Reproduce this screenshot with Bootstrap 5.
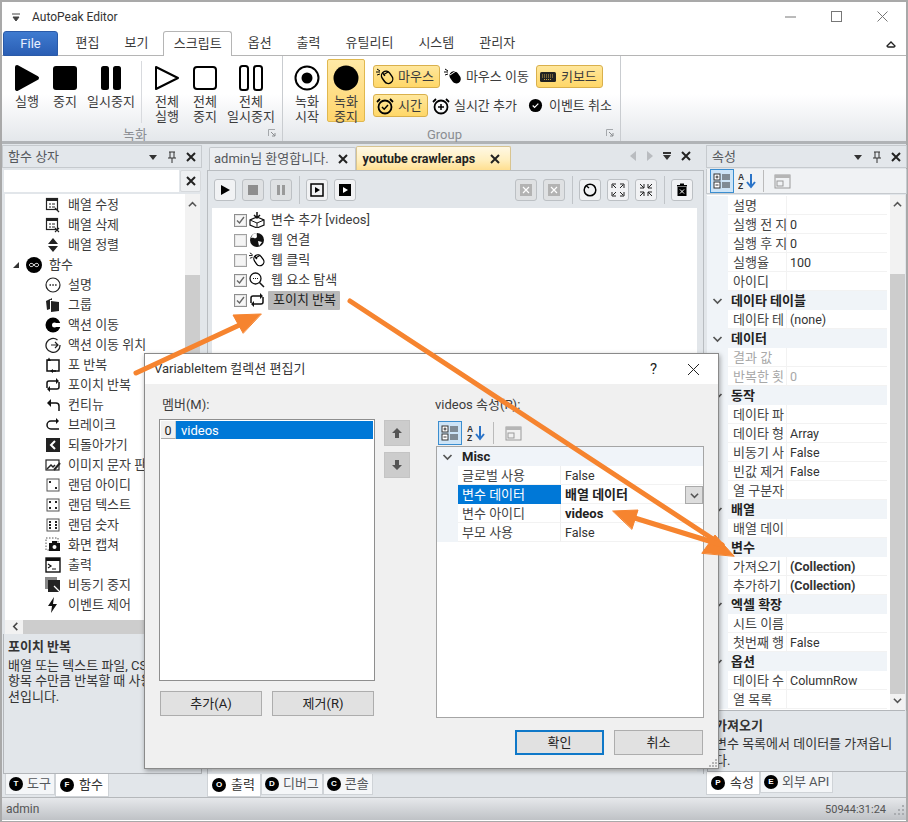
<!DOCTYPE html>
<html lang="ko">
<head>
<meta charset="utf-8">
<title>AutoPeak Editor</title>
<link rel="stylesheet" href="https://cdn.jsdelivr.net/npm/bootstrap@5.3.0/dist/css/bootstrap.min.css">
<style>
html,body{margin:0;width:908px;height:822px;overflow:hidden;background:#fff}
body{font-family:Roboto,"Noto Sans CJK KR",sans-serif;font-size:13px;line-height:16px;color:#3c3c3c}
svg{display:block;flex:none}
.aw{position:relative;width:908px;height:822px;border:1px solid #a9a9a9;border-width:2px 2px 1px 2px}
.tbar{height:29px;padding-left:18px;background:#fff}
.tbar-t{margin-left:11px;color:#333;font-size:12px}
.wbtns{margin-left:auto;padding-right:18px;gap:35px}
.rtabs{height:25px;background:#fff;border-bottom:1px solid #b5b5b5;padding-left:1px;position:relative}
.filebtn{width:55px;height:25px;background:linear-gradient(#3f7bd0,#2a5eb4);border:1px solid #2a5aa8;border-radius:3px 3px 0 0;color:#e8f0ff;text-align:center;line-height:23px;font-size:13px;margin-right:5px}
.rt{padding:0 12.5px;line-height:24px;white-space:nowrap}
.rt-on{background:#fff;border:1px solid #b5b5b5;border-bottom:0;border-radius:3px 3px 0 0;padding:0 9.5px;margin:0 3px 0 2.5px;height:25px;position:relative;z-index:1}
.rcol{position:absolute;right:10px;top:8px}
.ribbon{height:85px;background:linear-gradient(#fff 0,#fff 45%,#e4e7eb 100%);flex:none}
.rg{position:relative;border-right:1px solid #c9ccd0;height:85px;flex:none}
.rg-a{width:281px}
.rg-b{width:338px}
.rg-c{flex:1;border-right:0}
.rg-lab{position:absolute;bottom:-2px;left:0;right:14px;text-align:center;color:#8a8d92;height:17px;line-height:17px;font-size:13px}
.launch{position:absolute;right:6px;bottom:4px}
.bigb{height:75px;padding-top:8px;text-align:center;line-height:15px;white-space:nowrap;flex:none}
.bigb svg{margin:0 auto 2px}
.w38{width:38px}.w54{width:54px}
.rsep{width:1px;height:62px;margin:5px 3px 0;background:#d8dade;flex:none}
.rec-on{background:linear-gradient(#ffe9a6,#ffd56c);border:1px solid #e0b84f;border-radius:2px;height:63px;margin-top:3px;padding-top:4px;margin-left:1px}
.smrows{gap:6px;padding-top:9px;margin-left:8px}
.ybtn{height:23px;border:1px solid #d9b04c;background:linear-gradient(#ffe79c,#ffd768);border-radius:3px;padding:0 5px 0 2px;gap:4px;white-space:nowrap}
.ytxt{gap:4px;white-space:nowrap}
.main{height:656px;background:#e2e6ea;border-top:3px solid #b0b3b6;flex:none}
.lp{width:200px;padding-top:1px;flex:none}
.phead{height:23px;padding:0 5px;border:1px solid #c6cace;background:#e3e7eb;color:#55585c;margin-bottom:1px}
.pctl{margin-left:auto;gap:9px}
.searchrow{height:24px;gap:1px;padding:1px 1px 1px 2px}
.srch{flex:1;background:#fff}
.xbtn{width:21px;background:#eef0f2;border:1px solid #d6d9dc;border-radius:2px}
.tree{height:440px;background:#fff;margin:1px 2px 0 3px;position:relative;overflow:hidden;padding-top:1px}
.tr{height:20px;padding-left:40px;gap:7px;white-space:nowrap}
.tr-top{padding-left:7px;gap:4px}
.vs{position:absolute;right:0;top:0;bottom:14px;width:15px;background:#f2f2f2}
.vs-th{position:absolute;left:0;right:0;top:81px;bottom:0;background:#cdcdcd}
.vs-up{position:absolute;left:3px;top:6px}
.hs{position:absolute;left:0;right:0;bottom:0;height:14px;background:#f2f2f2}
.hs-th{position:absolute;left:18px;right:40px;top:0;bottom:0;background:#cdcdcd}
.hs-l{position:absolute;left:6px;top:2px}
.desc{border:1px solid #b3b6ba;border-top:0;background:#e2e6ea;padding:5px 4px;margin:0 0 0 1px;color:#333}
.desc b{display:block;margin-bottom:3px;font-weight:700}
.ld{height:140px;line-height:15.5px}
.ld span{display:block;white-space:nowrap}
.btabs{height:23px;padding-left:3px}
.bt{height:21px;padding:0 3px;gap:4px;background:#f4f6f8;border:1px solid #cfd3d7;border-top:0;white-space:nowrap;color:#55585c}
.bt-on{height:23px;background:#fff;color:#333;padding:0 5px 0 4px;gap:5px}
.ltr{width:14px;height:14px;border-radius:50%;background:#000;color:#fff;font-size:8px;font-weight:700;line-height:14px;text-align:center;flex:none;font-family:"Liberation Sans",sans-serif}
.cp{width:497px;margin-left:5px;padding-top:2px;flex:none}
.ctabs{height:24px;position:relative}
.ct{height:23px;margin-top:1px;background:#eceef1;border:1px solid #c4c8cc;border-bottom:0;border-radius:2px 2px 0 0;padding:0 7px 0 4px;gap:9px;white-space:nowrap;margin-left:2px;color:#55585c}
.ct-on{height:24px;margin-top:0;margin-left:0;background:linear-gradient(#fff8e4 0,#ffefc0 55%,#ffdf90 100%);border-color:#d8c490;font-weight:700;color:#222;padding:0 10px 0 6px;font-size:12.5px;gap:15px}
.ctctl{margin-left:auto;gap:9px;padding-right:13px}
.cbox{border:1px solid #b9bdc1;border-bottom:0;flex:1;padding:0 6px 0 4px;height:601px}
.ctb{height:37px;padding-left:2px}
.tb{width:22px;height:22px;border:1px solid #bcc0c4;border-radius:3px;background:#f1f2f4;display:flex;align-items:center;justify-content:center;flex:none;margin-right:6px}
.tb-dis{background:#dfe1e3}
.tbsep{width:1px;height:28px;background:#c0c4c8;margin:0 6px 0 1px;flex:none}
.list{height:564px;background:linear-gradient(#fff 92%,#e8eaec);padding:2px 0 0 22px}
.lr{height:20px;gap:2px;white-space:nowrap}
.chk{width:13px;height:13px;flex:none}
.sel{background:#b9b9b9;padding:0 4px 0 5px;margin-left:1px;height:19px;line-height:18px;border-radius:1px;color:#222}
.lbl{margin-left:4px}
.cbt{padding-left:0;height:23px}
.rp{width:201px;margin-left:2px;padding-top:1px;flex:none}
.rtbar{height:25px;padding-left:3px;gap:1px;background:#f0f2f4;border:1px solid #c6cace;border-top:0}
.pgic{width:24px;height:24px;display:flex;align-items:center;justify-content:center;flex:none}
.pgic-on{background:#cde4f7;border:1px solid #3b8ed0}
.pgsep{width:1px;height:22px;background:#bbb;margin:0 6px 0 3px}
.pgwrap{height:516px;background:#fff;position:relative;margin:1px 2px 0 1px;overflow:hidden;border-bottom:1px solid #b3b6ba}
.pg{position:absolute;left:0;top:1px;width:180px}
.pr{height:19px;display:flex;white-space:nowrap;line-height:20px}
.pg-g{width:21px;flex:none;background:#f0f4f8}
.pg-n{width:59px;flex:none;overflow:hidden;padding-left:5px;border-bottom:1px solid #f2f2f2;border-right:1px solid #f2f2f2;color:#444}
.pg-v{flex:1;padding-left:3px;border-bottom:1px solid #f2f2f2;font-size:12.5px;color:#333}
.pg-dim{color:#a8a8a8}
.pc{height:19px;background:#f0f4f8;font-weight:700;display:flex;align-items:center;white-space:nowrap;color:#222;padding-left:4px;gap:7px}
.pc svg{width:13px}
.pgs{position:absolute;right:0;top:0;bottom:0;width:15px;background:#f2f2f2}
.pgs-th{position:absolute;left:0;right:0;top:79px;bottom:16px;background:#cdcdcd}
.pgs-u{position:absolute;left:3px;top:5px}
.pgs-d{position:absolute;left:3px;bottom:5px}
.rd{height:61px;line-height:17px;padding:6px 2px 0 7px;white-space:nowrap;margin-left:1px}
.rd b{margin-bottom:1px}
.status{height:23px;background:linear-gradient(#e6e8eb,#bfc2c6);border-top:1px solid #b5b8bb;padding:0 1px 0 4px;color:#555;font-size:12px;line-height:23px;flex:none}
.st-t{gap:7px;font-size:11px}
.dlg{position:absolute;left:142px;top:351px;width:575px;height:416px;background:#f0f0f0;border:1px solid #8a8a8a;box-shadow:1px 2px 5px rgba(0,0,0,.35);z-index:5}
.dt{height:30px;background:#fff;padding-left:9px;color:#333}
.dtctl{margin-left:auto;gap:30px;padding-right:18px}
.dbody{position:relative;height:384px}
.d-lab{position:absolute;top:13px;white-space:nowrap}
.mlist{position:absolute;left:14px;top:35px;width:216px;height:262px;background:#fff;border:1px solid #8e8e8e;padding:1px;overflow:hidden}
.mi{height:18px;display:flex}
.mi-i{width:15px;background:#f0f0f0;border-right:1px solid #ccc;border-bottom:1px solid #aaa;text-align:center;line-height:19px;font-size:12.5px;flex:none;color:#222}
.mi-t{flex:1;background:#0078d7;color:#fff;padding-left:5px;line-height:19px;font-size:13px}
.ud{position:absolute;left:239px;width:26px;height:26px;background:#ccc;border:1px solid #c4c4c4;display:flex;align-items:center;justify-content:center}
.dbtn{position:absolute;height:25px;background:#e1e1e1;border:1px solid #adadad;text-align:center;line-height:23px;color:#222}
.dtb{position:absolute;left:293px;top:37px;gap:2px}
.dpg{position:absolute;left:291px;top:62px;width:268px;height:272px;background:#fff;border:1px solid #a5a5a5;overflow:hidden}
.dpc{height:19px;background:#f0f4f9;font-weight:700;display:flex;align-items:center;padding-left:5px;gap:9px;color:#222}
.dpr{height:19px;display:flex;line-height:20px;position:relative}
.dpr .pg-g{width:21px}
.dpr .pg-n{width:103px;padding-left:4px;border-right:1px solid #eee}
.dpr .pg-v{padding-left:4px;font-size:12.5px}
.dpr-s .pg-n{background:#0078d7;color:#fff;border:0;padding-left:4px}
.dpr b{font-size:13px;color:#222;font-weight:700}
.dd{position:absolute;right:0;top:1px;width:18px;height:18px;background:#ddd;border:1px solid #aaa;display:flex;align-items:center;justify-content:center}
.grip{position:absolute;right:0;bottom:0}
.arrows{position:absolute;left:-2px;top:-2px;z-index:9;pointer-events:none}
</style>
</head>
<body>
<svg width="0" height="0" style="position:absolute">
<defs>
<symbol id="i-play" viewBox="0 0 26 28"><path d="M3 3L23 14L3 25Z" fill="#000" stroke="#000" stroke-width="4" stroke-linejoin="round"/></symbol>
<symbol id="i-stop" viewBox="0 0 26 28"><rect x="1" y="2" width="24" height="24" rx="3" fill="#000"/></symbol>
<symbol id="i-pause" viewBox="0 0 26 28"><rect x="3" y="2" width="8" height="24" rx="2.5" fill="#000"/><rect x="15" y="2" width="8" height="24" rx="2.5" fill="#000"/></symbol>
<symbol id="o-play" viewBox="0 0 26 28"><path d="M2 3L24 14L2 25Z" fill="#fff" stroke="#000" stroke-width="2" stroke-linejoin="round"/></symbol>
<symbol id="o-stop" viewBox="0 0 26 28"><rect x="2" y="3" width="22" height="22" rx="3" fill="#fff" stroke="#000" stroke-width="2"/></symbol>
<symbol id="o-pause" viewBox="0 0 26 28"><rect x="2" y="2" width="8" height="24" rx="2.5" fill="#fff" stroke="#000" stroke-width="2"/><rect x="16" y="2" width="8" height="24" rx="2.5" fill="#fff" stroke="#000" stroke-width="2"/></symbol>
<symbol id="i-rec" viewBox="0 0 26 28"><circle cx="13" cy="14" r="11.5" fill="#fff" stroke="#000" stroke-width="2"/><circle cx="13" cy="14" r="5.5" fill="#000"/></symbol>
<symbol id="i-recon" viewBox="0 0 26 28"><circle cx="13" cy="14" r="12.5" fill="#000"/></symbol>
<symbol id="i-mouse" viewBox="0 0 18 18"><rect x="7" y="3" width="9" height="13" rx="4.5" transform="rotate(-35 11 10)" fill="none" stroke="#000" stroke-width="1.4"/><path d="M7 7L12 4M9 8l-2.500-3.500" stroke="#000" stroke-width="1.200" fill="none"/><path d="M0 4h4M1 1l3 2M1 7l3-1" stroke="#000" stroke-width="1"/></symbol>
<symbol id="i-mousef" viewBox="0 0 18 18"><rect x="7" y="3" width="9" height="13" rx="4.5" transform="rotate(-35 11 10)" fill="#000"/><path d="M6 7L12 3" stroke="#fff" stroke-width="1"/><path d="M0 4h4M1 1l3 2M1 7l3-1" stroke="#000" stroke-width="1"/></symbol>
<symbol id="i-kbd" viewBox="0 0 18 18"><rect x="1" y="4" width="16" height="10" rx="1.500" fill="#222"/><path d="M3 7h12M3 9h12M5 11.500h8" stroke="#c9a24a" stroke-width="1" stroke-dasharray="1 1"/></symbol>
<symbol id="i-clock" viewBox="0 0 18 18"><circle cx="9" cy="10" r="6.500" fill="none" stroke="#000" stroke-width="1.800"/><path d="M6 10l2.200 2.200L12 8" fill="none" stroke="#000" stroke-width="1.500"/><path d="M1 5l3-3M17 5l-3-3" stroke="#000" stroke-width="1.800"/></symbol>
<symbol id="i-clockp" viewBox="0 0 18 18"><circle cx="9" cy="10" r="6.500" fill="none" stroke="#000" stroke-width="1.800"/><path d="M6 10h6M9 7v6" fill="none" stroke="#000" stroke-width="1.500"/><path d="M1 5l3-3M17 5l-3-3" stroke="#000" stroke-width="1.800"/></symbol>
<symbol id="i-ccheck" viewBox="0 0 16 16"><circle cx="8" cy="8" r="7" fill="#000"/><path d="M5 8l2 2 4-4" fill="none" stroke="#fff" stroke-width="1.300"/></symbol>
<symbol id="i-launch" viewBox="0 0 8 8"><path d="M.5 7V.5H7" fill="none" stroke="#a5a8ac"/><path d="M3 3l4 4M7 4v3H4" fill="none" stroke="#8a8d90"/></symbol>
<symbol id="x-s" viewBox="0 0 10 10"><path d="M1 1l8 8M9 1l-8 8" stroke="#222" stroke-width="2"/></symbol>
<symbol id="tri-d" viewBox="0 0 10 10"><path d="M1 3h8L5 8z" fill="#333"/></symbol>
<symbol id="pin" viewBox="0 0 10 12"><path d="M2 1h6M3 1v6M7 1v6M1 7h8M5 7v5" stroke="#333" fill="none"/></symbol>
<symbol id="chev-u" viewBox="0 0 10 10"><path d="M1 7l4-4 4 4" fill="none" stroke="#555" stroke-width="1.700"/></symbol>
<symbol id="chev-d" viewBox="0 0 10 10"><path d="M1 3l4 4 4-4" fill="none" stroke="#555" stroke-width="1.700"/></symbol>
<symbol id="chev-l" viewBox="0 0 10 10"><path d="M7 1L3 5l4 4" fill="none" stroke="#444" stroke-width="1.700"/></symbol>
<symbol id="c-tbl" viewBox="0 0 16 16"><rect x="1.500" y="1.500" width="11" height="11" fill="#fff" stroke="#222" stroke-width="1.200"/><rect x="1.500" y="1.500" width="11" height="2.500" fill="#222"/><path d="M4 7h2M7 7h3M4 10h2M7 10h3" stroke="#222"/><path d="M10 11l4 4" stroke="#222" stroke-width="1.300"/></symbol>
<symbol id="c-tblx" viewBox="0 0 16 16"><rect x="1.500" y="1.500" width="11" height="11" fill="#fff" stroke="#222" stroke-width="1.200"/><rect x="1.500" y="1.500" width="11" height="2.500" fill="#222"/><path d="M4 7h2M7 7h3M4 10h2M7 10h3" stroke="#222"/><path d="M10 11l4 4M14 11l-4 4" stroke="#222" stroke-width="1.100"/></symbol>
<symbol id="c-sort" viewBox="0 0 16 16"><path d="M8 1l5 6H3zM8 15l5-6H3z" fill="#222"/></symbol>
<symbol id="c-inf" viewBox="0 0 16 16"><circle cx="8" cy="8" r="8" fill="#000"/><path d="M8 8C6.500 5.800 3.500 6 3.500 8S6.500 10.200 8 8 12.500 5.800 12.500 8 9.500 10.200 8 8" fill="none" stroke="#fff" stroke-width="1"/></symbol>
<symbol id="c-dots" viewBox="0 0 16 16"><circle cx="8" cy="8" r="7" fill="#fff" stroke="#222" stroke-width="1.200"/><path d="M4.500 8h1.500M7.300 8h1.500M10.100 8h1.500" stroke="#222" stroke-width="1.400"/></symbol>
<symbol id="c-grp" viewBox="0 0 16 16"><path d="M1 4l4-2v10l-3 1zM4 3l3-2v2zM6 4l8 1v9l-8 1z" fill="#222"/></symbol>
<symbol id="c-c" viewBox="0 0 16 16"><circle cx="8" cy="8" r="7.500" fill="#000"/><circle cx="9.500" cy="8" r="2.500" fill="#fff"/><path d="M10 6h6v4h-6z" fill="#fff"/></symbol>
<symbol id="c-go" viewBox="0 0 16 16"><path d="M12.500 3A7 7 0 1 0 15 8" fill="none" stroke="#222" stroke-width="1.300"/><path d="M4 8h7M8 5l3 3-3 3" stroke="#222" fill="none" stroke-width="1.200" transform="translate(2 0)"/></symbol>
<symbol id="c-for" viewBox="0 0 16 16"><path d="M5 3h9v11H8" fill="none" stroke="#111" stroke-width="1.500"/><path d="M11 14H2V3h1" fill="none" stroke="#111" stroke-width="1.500"/><path d="M2 4l2-3.500L6 4zM8 12l-3 2 3 2z" fill="#111"/></symbol>
<symbol id="c-each" viewBox="0 0 16 16"><path d="M2 11V6a2 2 0 0 1 2-2h9M14 5v5a2 2 0 0 1-2 2H3" fill="none" stroke="#111" stroke-width="1.500"/><path d="M11 1l3 3-3 3zM5 9l-3 3 3 3z" fill="#111"/></symbol>
<symbol id="c-cont" viewBox="0 0 16 16"><path d="M14 14V9a3 3 0 0 0-3-3H4" fill="none" stroke="#111" stroke-width="1.500"/><path d="M6 2L2 6l4 4z" fill="#111"/></symbol>
<symbol id="c-brk" viewBox="0 0 16 16"><path d="M13 4H6a4 4 0 0 0 0 8h8" fill="none" stroke="#111" stroke-width="1.500"/><path d="M11 1l3 3-3 3z" fill="#111"/></symbol>
<symbol id="c-back" viewBox="0 0 16 16"><rect x="1" y="1" width="14" height="14" fill="#222"/><path d="M10 4L6 8l4 4" fill="none" stroke="#fff" stroke-width="2"/></symbol>
<symbol id="c-img" viewBox="0 0 16 16"><rect x="1" y="3" width="13" height="10" fill="#fff" stroke="#222" stroke-width="1.200"/><path d="M2 12l4-4 2 2 2-2" stroke="#222" fill="none" stroke-width="1.500"/><path d="M9 13l6-7" stroke="#222" stroke-width="2"/></symbol>
<symbol id="c-d1" viewBox="0 0 16 16"><rect x="2" y="2" width="12" height="12" fill="#fff" stroke="#555"/><rect x="4" y="4" width="2" height="2" fill="#222"/><rect x="10" y="10" width="2" height="2" fill="#222"/></symbol>
<symbol id="c-d2" viewBox="0 0 16 16"><rect x="2" y="2" width="12" height="12" fill="#fff" stroke="#555"/><path d="M4 4h2v2H4zM10 4h2v2h-2zM4 10h2v2H4zM10 10h2v2h-2z" fill="#222"/></symbol>
<symbol id="c-d3" viewBox="0 0 16 16"><rect x="2" y="2" width="12" height="12" fill="#fff" stroke="#555"/><path d="M4 4h2v2H4zM10 4h2v2h-2zM4 7h2v2H4zM10 7h2v2h-2zM4 10h2v2H4zM10 10h2v2h-2z" fill="#222"/></symbol>
<symbol id="c-cap" viewBox="0 0 16 16"><rect x="1" y="1" width="12" height="12" fill="none" stroke="#555" stroke-dasharray="1.500 1.500"/><rect x="4" y="6" width="11" height="8" fill="#111"/><circle cx="9.500" cy="10" r="2" fill="#fff"/><rect x="7" y="4" width="5" height="3" fill="#111"/></symbol>
<symbol id="c-term" viewBox="0 0 16 16"><rect x="1" y="1" width="14" height="14" fill="#fff" stroke="#111" stroke-width="1.400"/><rect x="1" y="1" width="14" height="3" fill="#111"/><path d="M3 7l3 2-3 2M7 12h4" fill="none" stroke="#111" stroke-width="1.200"/></symbol>
<symbol id="c-asyn" viewBox="0 0 16 16"><rect x="0" y="0" width="12" height="12" fill="#888"/><rect x="3" y="3" width="12" height="12" fill="#222"/><path d="M9 9l6 6" stroke="#fff" stroke-width="1.300"/></symbol>
<symbol id="c-bolt" viewBox="0 0 16 16"><path d="M9 0L3 9h4l-1 7 6-9H8z" fill="#111"/></symbol>
<symbol id="l-box" viewBox="0 0 16 16"><path d="M8 5l7 3v5l-7 3-7-3V8z" fill="#fff" stroke="#111" stroke-width="1.200"/><path d="M1 8l7 3 7-3M8 11v5" fill="none" stroke="#111"/><path d="M8 0v6M5 3l3 3 3-3" stroke="#111" fill="none" stroke-width="1.500"/></symbol>
<symbol id="l-web" viewBox="0 0 16 16"><circle cx="8" cy="8" r="7" fill="#111"/><path d="M2 6c3-1 3 1 5 0s0-4 1-5c-3 0-5 2-6 5zM9 9l4 1-3 4z" fill="#fff"/></symbol>
<symbol id="l-srch" viewBox="0 0 16 16"><circle cx="6.500" cy="6.500" r="5.500" fill="#fff" stroke="#111" stroke-width="1.300"/><path d="M10.500 10.500L15 15" stroke="#111" stroke-width="1.500"/><path d="M4 6.500h1M6 6.500h1M8 6.500h1" stroke="#111"/></symbol>
<symbol id="chk-on" viewBox="0 0 13 13"><rect x=".5" y=".5" width="12" height="12" fill="#e6e6e6" stroke="#8e8e8e"/><rect x="2" y="2" width="9" height="9" fill="#f7f7f7"/><path d="M3 6.500l2.500 2.500L10 3" fill="none" stroke="#666" stroke-width="1.400"/></symbol>
<symbol id="chk-off" viewBox="0 0 13 13"><rect x=".5" y=".5" width="12" height="12" fill="#e6e6e6" stroke="#a0a0a0"/><rect x="2" y="2" width="9" height="9" fill="#f4f4f4"/></symbol>
<symbol id="p-cat" viewBox="0 0 18 18"><rect x="1" y="2" width="6" height="6" fill="#fff" stroke="#333"/><rect x="1" y="10" width="6" height="6" fill="#fff" stroke="#333"/><path d="M2.500 5h3M4 3.500v3M2.500 13h3" stroke="#333"/><path d="M9 3h8M9 5h8M9 7h8M9 11h8M9 13h8M9 15h8" stroke="#333" stroke-width="1"/></symbol>
<symbol id="p-az" viewBox="0 0 18 18"><text x="0" y="8" font-size="8.500" font-weight="700" font-family="Liberation Sans" fill="#333">A</text><text x="0" y="17" font-size="8.500" font-weight="700" font-family="Liberation Sans" fill="#333">Z</text><path d="M13 2v12M9 10l4 5 4-5" fill="none" stroke="#2b74c8" stroke-width="2"/></symbol>
<symbol id="p-pg" viewBox="0 0 18 18"><rect x="1" y="3" width="15" height="13" fill="none" stroke="#9a9a9a"/><rect x="1" y="3" width="15" height="3" fill="#b5b5b5"/><rect x="3" y="9" width="6" height="5" fill="none" stroke="#9a9a9a"/></symbol>
</defs>
</svg>
<div class="aw d-flex flex-column">
  <div class="tbar d-flex align-items-center flex-none">
    <svg width="10" height="10" style="margin-left:-9px"><path d="M1 2h8M2 5h6l-3 4z" stroke="#444" fill="#444"/></svg>
    <span class="tbar-t">AutoPeak Editor</span>
    <div class="wbtns d-flex align-items-center">
      <svg width="11" height="11"><path d="M0 6h11" stroke="#777"/></svg>
      <svg width="11" height="11"><rect x=".5" y=".5" width="10" height="10" fill="none" stroke="#777"/></svg>
      <svg width="11" height="11"><path d="M.5.500l10 10M10.500.500l-10 10" stroke="#777"/></svg>
    </div>
  </div>
  <div class="rtabs d-flex flex-none">
    <div class="filebtn">File</div>
    <div class="rt">편집</div><div class="rt">보기</div>
    <div class="rt rt-on">스크립트</div>
    <div class="rt">옵션</div><div class="rt">출력</div><div class="rt">유틸리티</div><div class="rt">시스템</div><div class="rt">관리자</div>
    <svg class="rcol" width="10" height="10" viewBox="0 0 10 10"><path d="M1 7l4-4 4 4-1 1H2z" fill="none" stroke="#222" stroke-width="1.300"/></svg>
  </div>
  <div class="ribbon d-flex">
    <div class="rg rg-a d-flex align-items-start ps-1">
      <div class="bigb w38" style="margin-left:2px"><svg width="26" height="28"><use href="#i-play"/></svg>실행</div>
      <div class="bigb w38"><svg width="26" height="28"><use href="#i-stop"/></svg>중지</div>
      <div class="bigb w54"><svg width="26" height="28"><use href="#i-pause"/></svg>일시중지</div>
      <div class="rsep"></div>
      <div class="bigb w38" style="margin-left:3px"><svg width="26" height="28"><use href="#o-play"/></svg>전체<br>실행</div>
      <div class="bigb w38"><svg width="26" height="28"><use href="#o-stop"/></svg>전체<br>중지</div>
      <div class="bigb w54"><svg width="26" height="28"><use href="#o-pause"/></svg>전체<br>일시중지</div>
      <div class="rg-lab">녹화</div>
      <svg class="launch" width="8" height="8"><use href="#i-launch"/></svg>
    </div>
    <div class="rg rg-b d-flex align-items-start" style="padding-left:5px">
      <div class="bigb w38"><svg width="26" height="28"><use href="#i-rec"/></svg>녹화<br>시작</div>
      <div class="bigb rec-on w38"><svg width="26" height="28"><use href="#i-recon"/></svg>녹화<br>중지</div>
      <div class="smrows d-flex flex-column">
        <div class="d-flex align-items-center">
          <div class="ybtn d-flex align-items-center"><svg width="18" height="18"><use href="#i-mouse"/></svg>마우스</div>
          <div class="ytxt d-flex align-items-center ms-1"><svg width="18" height="18"><use href="#i-mousef"/></svg>마우스 이동</div>
          <div class="ybtn d-flex align-items-center" style="margin-left:7px"><svg width="18" height="18"><use href="#i-kbd"/></svg>키보드</div>
        </div>
        <div class="d-flex align-items-center">
          <div class="ybtn d-flex align-items-center"><svg width="18" height="18"><use href="#i-clock"/></svg>시간</div>
          <div class="ytxt d-flex align-items-center ms-1"><svg width="18" height="18"><use href="#i-clockp"/></svg>실시간 추가</div>
          <div class="ytxt d-flex align-items-center" style="margin-left:11px;gap:6px"><svg width="15" height="15"><use href="#i-ccheck"/></svg>이벤트 취소</div>
        </div>
      </div>
      <div class="rg-lab">Group</div>
      <svg class="launch" width="8" height="8"><use href="#i-launch"/></svg>
    </div>
    <div class="rg rg-c"></div>
  </div>
  <div class="main d-flex">
    <div class="lp d-flex flex-column">
      <div class="phead d-flex align-items-center">함수 상자
        <div class="pctl d-flex align-items-center">
          <svg width="10" height="10"><use href="#tri-d"/></svg><svg width="10" height="12"><use href="#pin"/></svg><svg width="10" height="10"><use href="#x-s"/></svg>
        </div>
      </div>
      <div class="searchrow d-flex">
        <div class="srch"></div>
        <div class="xbtn d-flex align-items-center justify-content-center"><svg width="10" height="10"><use href="#x-s"/></svg></div>
      </div>
      <div class="tree">
        <div class="tr d-flex align-items-center"><svg width="16" height="16"><use href="#c-tbl"/></svg>배열 수정</div>
        <div class="tr d-flex align-items-center"><svg width="16" height="16"><use href="#c-tblx"/></svg>배열 삭제</div>
        <div class="tr d-flex align-items-center"><svg width="16" height="16"><use href="#c-sort"/></svg>배열 정렬</div>
        <div class="tr tr-top d-flex align-items-center"><svg width="8" height="8" style="margin-right:2px"><path d="M7 1v6H1z" fill="#333"/></svg><svg width="16" height="16"><use href="#c-inf"/></svg><span style="margin-left:3px">함수</span></div>
        <div class="tr d-flex align-items-center"><svg width="16" height="16"><use href="#c-dots"/></svg>설명</div>
        <div class="tr d-flex align-items-center"><svg width="16" height="16"><use href="#c-grp"/></svg>그룹</div>
        <div class="tr d-flex align-items-center"><svg width="16" height="16"><use href="#c-c"/></svg>액션 이동</div>
        <div class="tr d-flex align-items-center"><svg width="16" height="16"><use href="#c-go"/></svg>액션 이동 위치</div>
        <div class="tr d-flex align-items-center"><svg width="16" height="16"><use href="#c-for"/></svg>포 반복</div>
        <div class="tr d-flex align-items-center"><svg width="16" height="16"><use href="#c-each"/></svg>포이치 반복</div>
        <div class="tr d-flex align-items-center"><svg width="16" height="16"><use href="#c-cont"/></svg>컨티뉴</div>
        <div class="tr d-flex align-items-center"><svg width="16" height="16"><use href="#c-brk"/></svg>브레이크</div>
        <div class="tr d-flex align-items-center"><svg width="16" height="16"><use href="#c-back"/></svg>되돌아가기</div>
        <div class="tr d-flex align-items-center"><svg width="16" height="16"><use href="#c-img"/></svg>이미지 문자 판</div>
        <div class="tr d-flex align-items-center"><svg width="16" height="16"><use href="#c-d1"/></svg>랜덤 아이디</div>
        <div class="tr d-flex align-items-center"><svg width="16" height="16"><use href="#c-d2"/></svg>랜덤 텍스트</div>
        <div class="tr d-flex align-items-center"><svg width="16" height="16"><use href="#c-d3"/></svg>랜덤 숫자</div>
        <div class="tr d-flex align-items-center"><svg width="16" height="16"><use href="#c-cap"/></svg>화면 캡쳐</div>
        <div class="tr d-flex align-items-center"><svg width="16" height="16"><use href="#c-term"/></svg>출력</div>
        <div class="tr d-flex align-items-center"><svg width="16" height="16"><use href="#c-asyn"/></svg>비동기 중지</div>
        <div class="tr d-flex align-items-center"><svg width="16" height="16"><use href="#c-bolt"/></svg>이벤트 제어</div>
        <div class="vs"><div class="vs-th"></div><svg class="vs-up" width="9" height="9"><use href="#chev-u"/></svg></div>
        <div class="hs"><div class="hs-th"></div><svg class="hs-l" width="9" height="9"><use href="#chev-l"/></svg></div>
      </div>
      <div class="desc ld"><b>포이치 반복</b><span>배열 또는 텍스트 파일, CSV</span><span>항목 수만큼 반복할 때 사용</span><span>션입니다.</span></div>
      <div class="btabs d-flex align-items-start">
        <div class="bt d-flex align-items-center"><span class="ltr">T</span>도구</div>
        <div class="bt bt-on d-flex align-items-center"><span class="ltr">F</span>함수</div>
      </div>
    </div>
    <div class="cp d-flex flex-column">
      <div class="ctabs d-flex align-items-start">
        <div class="ct d-flex align-items-center">admin님 환영합니다.<svg width="10" height="10"><use href="#x-s"/></svg></div>
        <div class="ct ct-on d-flex align-items-center">youtube crawler.aps<svg width="10" height="10"><use href="#x-s"/></svg></div>
        <div class="ctctl d-flex align-items-center" style="height:20px">
          <svg width="7" height="10"><path d="M6 0v10L0 5z" fill="#b9bcc0"/></svg>
          <svg width="7" height="10"><path d="M1 0v10l6-5z" fill="#b9bcc0"/></svg>
          <svg width="10" height="10"><path d="M1 1h8v2H1zM1 4h8L5 9z" fill="#333"/></svg>
          <svg width="10" height="10"><use href="#x-s"/></svg>
        </div>
      </div>
      <div class="cbox d-flex flex-column">
        <div class="ctb d-flex align-items-center">
          <div class="tb"><svg width="12" height="12"><path d="M2 1l9 5-9 5z" fill="#000"/></svg></div>
          <div class="tb tb-dis"><svg width="12" height="12"><rect x="1" y="1" width="10" height="10" fill="#8e8e8e"/></svg></div>
          <div class="tb tb-dis"><svg width="12" height="12"><path d="M2 1h3v10H2zM7 1h3v10H7z" fill="#9a9a9a"/></svg></div>
          <div class="tbsep"></div>
          <div class="tb"><svg width="14" height="14"><rect x="1" y="1" width="12" height="12" fill="none" stroke="#000" stroke-width="1.500"/><path d="M5 4l5 3-5 3z" fill="#000"/></svg></div>
          <div class="tb"><svg width="14" height="14"><rect x="1" y="1" width="12" height="12" fill="#000"/><path d="M5 4l5 3-5 3z" fill="#fff"/></svg></div>
          <div style="flex:0 0 153px"></div>
          <div class="tb tb-dis"><svg width="12" height="12"><rect width="12" height="12" fill="#b3b3b3"/><path d="M3 3l6 6M9 3l-6 6" stroke="#fff" stroke-width="1.200"/></svg></div>
          <div class="tb tb-dis"><svg width="12" height="12"><rect width="12" height="12" fill="#b3b3b3"/><path d="M3 3l6 6M9 3l-6 6" stroke="#fff" stroke-width="1.200"/></svg></div>
          <div class="tbsep"></div>
          <div class="tb"><svg width="14" height="14"><circle cx="7" cy="7" r="5.800" fill="none" stroke="#000" stroke-width="1.500"/><path d="M3.500 3l2.500 2" stroke="#000" stroke-width="1.500"/></svg></div>
          <div class="tb"><svg width="14" height="14"><path d="M1 5V1h4M9 1h4v4M13 9v4H9M5 13H1V9M2 2l3 3M12 2L9 5M12 12L9 9M2 12l3-3" fill="none" stroke="#222"/></svg></div>
          <div class="tb"><svg width="14" height="14"><path d="M5 1v4H1M9 1v4h4M13 9H9v4M1 9h4v4M1 1l4 4M13 1L9 5M13 13L9 9M1 13l4-4" fill="none" stroke="#222"/></svg></div>
          <div class="tbsep"></div>
          <div class="tb"><svg width="14" height="14"><path d="M2 2h10v1.500H2z" fill="#000"/><rect x="2.500" y="4" width="9" height="9" fill="#000"/><path d="M5 6.500l4 4M9 6.500l-4 4" stroke="#fff"/><rect x="5" y=".5" width="4" height="2" fill="#000"/></svg></div>
        </div>
        <div class="list">
          <div class="lr d-flex align-items-center"><svg class="chk" width="13" height="13"><use href="#chk-on"/></svg><svg width="16" height="16"><use href="#l-box"/></svg><span class="lbl">변수 추가 [videos]</span></div>
          <div class="lr d-flex align-items-center"><svg class="chk" width="13" height="13"><use href="#chk-off"/></svg><svg width="16" height="16"><use href="#l-web"/></svg><span class="lbl">웹 연결</span></div>
          <div class="lr d-flex align-items-center"><svg class="chk" width="13" height="13"><use href="#chk-off"/></svg><svg width="16" height="16"><use href="#i-mouse"/></svg><span class="lbl">웹 클릭</span></div>
          <div class="lr d-flex align-items-center"><svg class="chk" width="13" height="13"><use href="#chk-on"/></svg><svg width="16" height="16"><use href="#l-srch"/></svg><span class="lbl">웹 요소 탐색</span></div>
          <div class="lr d-flex align-items-center"><svg class="chk" width="13" height="13"><use href="#chk-on"/></svg><svg width="16" height="16"><use href="#c-each"/></svg><span class="sel">포이치 반복</span></div>
        </div>
      </div>
      <div class="btabs cbt d-flex align-items-start">
        <div class="bt bt-on d-flex align-items-center"><span class="ltr">O</span>출력</div>
        <div class="bt d-flex align-items-center"><span class="ltr">D</span>디버그</div>
        <div class="bt d-flex align-items-center"><span class="ltr">C</span>콘솔</div>
      </div>
    </div>
    <div class="rp d-flex flex-column">
      <div class="phead d-flex align-items-center">속성
        <div class="pctl d-flex align-items-center">
          <svg width="10" height="10"><use href="#tri-d"/></svg><svg width="10" height="12"><use href="#pin"/></svg><svg width="10" height="10"><use href="#x-s"/></svg>
        </div>
      </div>
      <div class="rtbar d-flex align-items-center">
        <div class="pgic pgic-on"><svg width="18" height="18"><use href="#p-cat"/></svg></div>
        <div class="pgic"><svg width="18" height="18"><use href="#p-az"/></svg></div>
        <div class="pgsep"></div>
        <div class="pgic"><svg width="18" height="18"><use href="#p-pg"/></svg></div>
      </div>
      <div class="pgwrap">
        <div class="pg">
          <div class="pr"><div class="pg-g"></div><div class="pg-n">설명</div><div class="pg-v"></div></div>
          <div class="pr"><div class="pg-g"></div><div class="pg-n">실행 전 지</div><div class="pg-v">0</div></div>
          <div class="pr"><div class="pg-g"></div><div class="pg-n">실행 후 지</div><div class="pg-v">0</div></div>
          <div class="pr"><div class="pg-g"></div><div class="pg-n">실행율</div><div class="pg-v">100</div></div>
          <div class="pr"><div class="pg-g"></div><div class="pg-n">아이디</div><div class="pg-v"></div></div>
          <div class="pc"><svg width="13" height="10"><use href="#chev-d"/></svg>데이타 테이블</div>
          <div class="pr"><div class="pg-g"></div><div class="pg-n">데이타 테</div><div class="pg-v">(none)</div></div>
          <div class="pc"><svg width="13" height="10"><use href="#chev-d"/></svg>데이터</div>
          <div class="pr"><div class="pg-g"></div><div class="pg-n pg-dim">결과 값</div><div class="pg-v"></div></div>
          <div class="pr"><div class="pg-g"></div><div class="pg-n pg-dim">반복한 횟</div><div class="pg-v pg-dim">0</div></div>
          <div class="pc"><svg width="13" height="10"><use href="#chev-d"/></svg>동작</div>
          <div class="pr"><div class="pg-g"></div><div class="pg-n">데이타 파</div><div class="pg-v"></div></div>
          <div class="pr"><div class="pg-g"></div><div class="pg-n">데이타 형</div><div class="pg-v">Array</div></div>
          <div class="pr"><div class="pg-g"></div><div class="pg-n">비동기 사</div><div class="pg-v">False</div></div>
          <div class="pr"><div class="pg-g"></div><div class="pg-n">빈값 제거</div><div class="pg-v">False</div></div>
          <div class="pr"><div class="pg-g"></div><div class="pg-n">열 구분자</div><div class="pg-v"></div></div>
          <div class="pc"><svg width="13" height="10"><use href="#chev-d"/></svg>배열</div>
          <div class="pr"><div class="pg-g"></div><div class="pg-n">배열 데이</div><div class="pg-v"></div></div>
          <div class="pc"><svg width="13" height="10"><use href="#chev-d"/></svg>변수</div>
          <div class="pr"><div class="pg-g"></div><div class="pg-n">가져오기</div><div class="pg-v fw-bold">(Collection)</div></div>
          <div class="pr"><div class="pg-g"></div><div class="pg-n">추가하기</div><div class="pg-v fw-bold">(Collection)</div></div>
          <div class="pc"><svg width="13" height="10"><use href="#chev-d"/></svg>엑셀 확장</div>
          <div class="pr"><div class="pg-g"></div><div class="pg-n">시트 이름</div><div class="pg-v"></div></div>
          <div class="pr"><div class="pg-g"></div><div class="pg-n">첫번째 행</div><div class="pg-v">False</div></div>
          <div class="pc"><svg width="13" height="10"><use href="#chev-d"/></svg>옵션</div>
          <div class="pr"><div class="pg-g"></div><div class="pg-n">데이타 수</div><div class="pg-v">ColumnRow</div></div>
          <div class="pr"><div class="pg-g"></div><div class="pg-n">열 목록</div><div class="pg-v"></div></div>
        </div>
        <div class="pgs"><div class="pgs-th"></div><svg class="pgs-u" width="9" height="9"><use href="#chev-u"/></svg><svg class="pgs-d" width="9" height="9"><use href="#chev-d"/></svg></div>
      </div>
      <div class="desc rd"><b class="d-block">가져오기</b>변수 목록에서 데이터를 가져옵니<br>다.</div>
      <div class="btabs cbt d-flex align-items-start">
        <div class="bt bt-on d-flex align-items-center"><span class="ltr">P</span>속성</div>
        <div class="bt d-flex align-items-center"><span class="ltr">E</span>외부 API</div>
      </div>
    </div>
  </div>
  <div class="status d-flex justify-content-between">
    <span>admin</span>
    <div class="st-t d-flex align-items-center">50944:31:24<svg width="12" height="12" viewBox="0 0 12 12"><path d="M9 2h2v2H9zM5 6h2v2H5zM9 6h2v2H9zM1 10h2v2H1zM5 10h2v2H5zM9 10h2v2H9z" fill="#a9acb0"/></svg></div>
  </div>

  <div class="dlg">
    <div class="dt d-flex align-items-center">VariableItem 컬렉션 편집기
      <div class="dtctl d-flex align-items-center">
        <span style="font-size:15px;color:#222;">?</span>
        <svg width="13" height="13"><path d="M1 1l11 11M12 1L1 12" stroke="#222"/></svg>
      </div>
    </div>
    <div class="dbody">
      <div class="d-lab" style="left:17px">멤버(M):</div>
      <div class="mlist"><div class="mi"><div class="mi-i">0</div><div class="mi-t">videos</div></div></div>
      <div class="ud" style="top:36px"><svg width="12" height="12"><path d="M6 1l5 5H8v5H4V6H1z" fill="#555"/></svg></div>
      <div class="ud" style="top:68px"><svg width="12" height="12"><path d="M6 11l5-5H8V1H4v5H1z" fill="#555"/></svg></div>
      <div class="dbtn" style="left:15px;top:307px;width:102px">추가(A)</div>
      <div class="dbtn" style="left:127px;top:307px;width:102px">제거(R)</div>
      <div class="d-lab" style="left:290px">videos 속성(P):</div>
      <div class="dtb d-flex align-items-center">
        <div class="pgic pgic-on"><svg width="18" height="18"><use href="#p-cat"/></svg></div>
        <div class="pgic"><svg width="18" height="18"><use href="#p-az"/></svg></div>
        <div class="pgsep"></div>
        <div class="pgic"><svg width="18" height="18"><use href="#p-pg"/></svg></div>
      </div>
      <div class="dpg">
        <div class="dpc"><svg width="11" height="10"><use href="#chev-d"/></svg>Misc</div>
        <div class="dpr"><div class="pg-g"></div><div class="pg-n">글로벌 사용</div><div class="pg-v">False</div></div>
        <div class="dpr dpr-s"><div class="pg-g"></div><div class="pg-n">변수 데이터</div><div class="pg-v"><b>배열 데이터</b></div><div class="dd"><svg width="9" height="9"><use href="#chev-d"/></svg></div></div>
        <div class="dpr"><div class="pg-g"></div><div class="pg-n">변수 아이디</div><div class="pg-v"><b>videos</b></div></div>
        <div class="dpr"><div class="pg-g"></div><div class="pg-n">부모 사용</div><div class="pg-v">False</div></div>
      </div>
      <div class="dbtn" style="left:370px;top:346px;width:89px;border:2px solid #0f78c8;line-height:21px">확인</div>
      <div class="dbtn" style="left:469px;top:346px;width:89px">취소</div>
      <svg class="grip" width="10" height="10" viewBox="0 0 10 10"><path d="M7 1h2v2H7zM4 4h2v2H4zM7 4h2v2H7zM1 7h2v2H1zM4 7h2v2H4zM7 7h2v2H7z" fill="#b5b5b5"/></svg>
    </div>
  </div>

  <svg class="arrows" width="908" height="822" viewBox="0 0 908 822">
    <g fill="#f6842f" stroke="#f6842f" stroke-linecap="round" stroke-linejoin="round">
      <path d="M136 373L246 322" fill="none" stroke-width="5"/>
      <path d="M261 314L233 315L243 333Z" stroke-width="1"/>
      <path d="M350 301L722 545" fill="none" stroke-width="5"/>
      <path d="M734 556L715 535L702 553Z" stroke-width="1"/>
      <path d="M722 545L625 515" fill="none" stroke-width="5"/>
      <path d="M613 511L638 510L632 529Z" stroke-width="1"/>
    </g>
  </svg>
</div>
</body>
</html>
